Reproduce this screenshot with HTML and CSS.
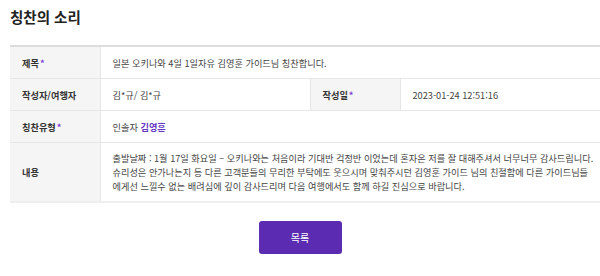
FILE: index.html
```html
<!DOCTYPE html>
<html lang="ko">
<head>
  <meta charset="UTF-8" />
  <meta name="viewport" content="width=device-width, initial-scale=1.0"/>
  <title>칭찬의 소리</title>
  <link rel="stylesheet" href="styles.css">
</head>
<body>
  <div class="board">
    <h2 class="board-title">칭찬의 소리</h2>

    <table class="view">
      <colgroup>
        <col class="c-label" />
        <col class="c-value" />
        <col class="c-label" />
        <col class="c-value2" />
      </colgroup>
      <tr>
        <th>제목<span class="req">*</span></th>
        <td colspan="3">일본 오키나와 4일 1일자유 김영훈 가이드님 칭찬합니다.</td>
      </tr>
      <tr>
        <th>작성자/여행자</th>
        <td>김*규/ 김*규</td>
        <th>작성일<span class="req">*</span></th>
        <td>2023-01-24 12:51:16</td>
      </tr>
      <tr>
        <th>칭찬유형<span class="req">*</span></th>
        <td colspan="3">인솔자 <span class="guide">김영훈</span></td>
      </tr>
      <tr class="content-row">
        <th>내용</th>
        <td colspan="3" class="content">출발날짜 : 1월 17일 화요일 &ndash; 오키나와는 처음이라 기대반 걱정반 이었는데 혼자온 저를 잘 대해주셔서 너무너무 감사드립니다.<br>슈리성은 안가나는지 등 다른 고객분들의 무리한 부탁에도 웃으시며 맞춰주시던 김영훈 가이드 님의 친절함에 다른 가이드님들<br>에게선 느낄수 없는 배려심에 깊이 감사드리며 다음 여행에서도 함께 하길 진심으로 바랍니다.</td>
      </tr>
    </table>

    <div class="btns">
      <button type="button" class="btn-list">목록</button>
    </div>
  </div>
</body>
</html>
```

FILE: styles.css
```css
body { margin: 0; font-family: "Noto Sans CJK KR", "Noto Sans", sans-serif; color: #333; background: #fff; }
.board { padding: 0 0 0 10px; }
.board-title { margin: 0; padding-top: 7px; height: 38px; font-size: 14.5px; font-weight: bold; color: #222; line-height: 20px; }
.view { width: 590px; border-collapse: collapse; border-top: 2px solid #ddd; border-bottom: 2px solid #eee; table-layout: fixed; font-size: 9.2px; }
.c-label { width: 90px; }
.c-value { width: 210px; }
.c-value2 { width: 200px; }
.view th, .view td { border-bottom: 1px solid #e6e6e6; height: 31px; padding: 0 12px; text-align: left; vertical-align: middle; }
.view th { background: #f5f5f5; color: #333; font-weight: bold; border-right: 1px solid #e6e6e6; }
.view td { color: #444; }
.view td + th { border-left: 1px solid #e6e6e6; }
.req { color: #7a3fd1; margin-left: 1px; }
.guide { color: #6338c2; font-weight: bold; }
.content-row th, .content-row td { height: 58px; border-bottom: 0; }
.content { line-height: 14px; white-space: nowrap; padding-right: 0; }
.btns { display: flex; justify-content: center; padding-top: 18px; padding-right: 10px; }
.btn-list { width: 83px; height: 33px; border: 0; border-radius: 3px; background: #5b2cb2; color: #fff; font-family: inherit; font-size: 10px; cursor: pointer; }
```
